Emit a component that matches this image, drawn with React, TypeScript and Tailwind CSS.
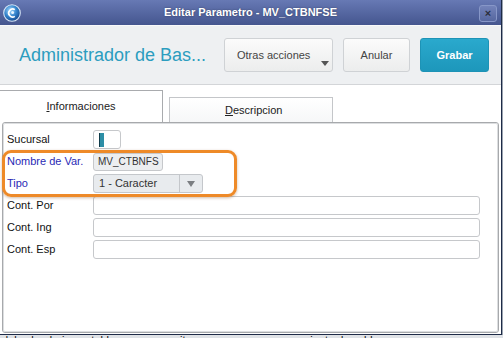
import React from "react";

function AppIcon() {
  return (
    <svg width="18" height="18" viewBox="0 0 18 18">
      <defs>
        <radialGradient id="ball" cx="40%" cy="35%" r="65%">
          <stop offset="0%" stopColor="#9fd8ff" />
          <stop offset="60%" stopColor="#2f7fc8" />
          <stop offset="100%" stopColor="#184c92" />
        </radialGradient>
      </defs>
      <circle cx="9" cy="9" r="8.3" fill="url(#ball)" stroke="#d8e6f6" strokeWidth="1.1" />
      <path d="M11.8 5.6 A4 4 0 1 0 11.8 12.4" fill="none" stroke="#ffffff" strokeWidth="1.6" />
      <circle cx="9.6" cy="8.6" r="1.5" fill="#e6f4ff" />
    </svg>
  );
}

const labelCls = "w-[86px] shrink-0 text-[11px] leading-none";

export default function App() {
  const longFields = ["Cont. Por", "Cont. Ing", "Cont. Esp"];

  return (
    <div className="relative w-[503px] h-[338px] overflow-hidden bg-[#dfe2e6] font-['Liberation_Sans',Arial,sans-serif]">
      <div className="flex">
        {/* Window */}
        <div className="w-[502px] h-[335px] flex flex-col border-r border-b border-[#1e2b47] bg-white">
          {/* Title bar */}
          <div className="relative h-[25px] shrink-0 flex items-center justify-center bg-gradient-to-b from-[#6779b4] to-[#45568f]">
            <div className="absolute left-[3px] top-[4px]">
              <AppIcon />
            </div>
            <span className="text-white text-[11px] font-bold [text-shadow:0_0_2px_rgba(0,0,0,0.4)]">
              Editar Parametro - MV_CTBNFSE
            </span>
            <div className="absolute left-[479px] top-[5px] w-[18px] h-[17px] rounded-[3px] border border-[#8797c8] bg-gradient-to-b from-[#7383ba] to-[#56679f] flex items-center justify-center text-[#2a2f3d] text-[11px] font-bold leading-none">
              ×
            </div>
          </div>

          {/* Header */}
          <div className="h-[60px] shrink-0 flex items-center bg-[#eef0f2] border-b border-[#d3d5d8] border-t border-t-[#f8f9fa]">
            <div className="pl-[19px] w-[224px] text-[18px] text-[#2c9dbf] whitespace-nowrap">
              Administrador de Bas...
            </div>
            <div className="flex gap-[10px]">
              <div className="relative w-[109px] h-[34px] rounded-[3px] border border-[#cfd2d5] bg-gradient-to-b from-[#fbfbfb] to-[#eceded] flex items-center pl-[12px] text-[11px] text-[#444]">
                Otras acciones
                <span className="absolute right-[3px] bottom-[5px] w-0 h-0 border-l-[4px] border-r-[4px] border-t-[5px] border-l-transparent border-r-transparent border-t-[#555]" />
              </div>
              <div className="w-[67px] h-[34px] rounded-[3px] border border-[#cfd2d5] bg-gradient-to-b from-[#fbfbfb] to-[#eceded] flex items-center justify-center text-[11px] text-[#444]">
                Anular
              </div>
              <div className="w-[69px] h-[34px] rounded-[3px] border border-[#1d93b6] bg-gradient-to-b from-[#2aa9cd] to-[#1d97bb] flex items-center justify-center text-[11px] font-bold text-white">
                Grabar
              </div>
            </div>
          </div>

          {/* Tabs */}
          <div className="h-[37px] shrink-0 flex items-end pt-[5px]">
            <div className="w-[163px] h-[32px] border-t border-r border-[#a9abae] bg-white flex items-center justify-center text-[11px] text-[#222] pb-[1px]">
              <span>
                <span className="underline">I</span>nformaciones
              </span>
            </div>
            <div className="ml-[6px] w-[164px] h-[25px] border-t border-l border-r border-[#c4c6c9] bg-gradient-to-b from-white to-[#f6f7f8] flex items-center pl-[55px] text-[11px] text-[#222]">
              <span>
                <span className="underline">D</span>escripcion
              </span>
            </div>
          </div>

          {/* Panel */}
          <div className="mx-[2px] mb-[1px] flex-1 rounded-[3px] border border-[#a7a9ac]">
            <div className="h-full rounded-[2px] border border-[#dcdee0] pt-[6px] pl-[3px] pr-[17px] flex flex-col gap-[3px]">
              <div className="h-[19px] flex items-center">
                <span className={labelCls + " text-[#111]"}>Sucursal</span>
                <div className="w-[28px] h-[19px] rounded-[3px] border border-[#c6c8cb] bg-white flex items-center pl-[5px]">
                  <div className="w-[5px] h-[14px] bg-[#2d8ea6] border-l border-[#0f3b4a]" />
                </div>
              </div>
              <div className="h-[19px] flex items-center">
                <span className={labelCls + " text-[#2a2ab5]"}>Nombre de Var.</span>
                <div className="w-[70px] h-[18px] rounded-[3px] border border-[#c6c8cb] bg-[#eceef0] flex items-center pl-[4px] text-[10px] text-[#333]">
                  MV_CTBNFS
                </div>
              </div>
              <div className="h-[19px] flex items-center">
                <span className={labelCls + " text-[#2a2ab5]"}>Tipo</span>
                <div className="w-[110px] h-[19px] rounded-[3px] border border-[#c4c7cb] bg-[#e8ebee] flex">
                  <div className="w-[86px] flex items-center pl-[5px] text-[11px] text-[#333] border-r border-[#c4c7cb]">
                    1 - Caracter
                  </div>
                  <div className="flex-1 flex items-center justify-center">
                    <span className="w-0 h-0 border-l-[4px] border-r-[4px] border-t-[6px] border-l-transparent border-r-transparent border-t-[#7b7e82]" />
                  </div>
                </div>
              </div>
              {longFields.map((f) => (
                <div key={f} className="h-[19px] flex items-center">
                  <span className={labelCls + " text-[#111]"}>{f}</span>
                  <div className="flex-1 h-[19px] rounded-[3px] border border-[#c6c8cb] bg-white" />
                </div>
              ))}
            </div>
          </div>
        </div>
        <div className="flex-1 border-l border-[#9aa3b0]" />
      </div>

      {/* Text of the page behind the window */}
      <div className="relative h-[3px] text-[11px] leading-[12px] text-[#111] whitespace-nowrap">
        <span className="absolute left-[2px] -top-[1px]">del calendario contable que no permiten re</span>
        <span className="absolute left-[262px] -top-[1px]">procesamiento de saldos</span>
      </div>

      {/* Orange highlight annotation */}
      <div className="absolute left-[2px] top-[150px] w-[235px] h-[47px] rounded-[9px] border-[3px] border-[#ee8a28] shadow-[0_1px_3px_rgba(120,60,0,0.35)]" />
    </div>
  );
}
